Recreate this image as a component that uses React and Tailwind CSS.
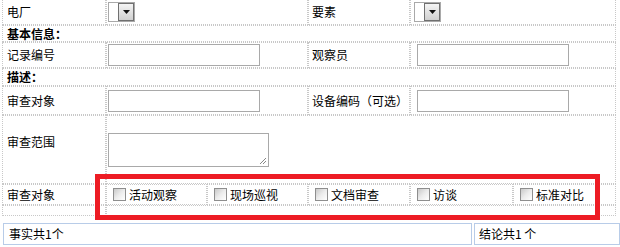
import React from 'react';

const cell = 'border border-dotted border-[#c8c8c8] p-0 align-middle';

const Select = ({ className = '' }) => (
  <div className={`flex h-[20px] w-[27px] border border-[#a9a9a9] bg-white ${className}`}>
    <div className="w-[9px]" />
    <div className="flex flex-1 items-center justify-center border border-[#707070] bg-gradient-to-b from-[#f4f4f4] to-[#d0d0d0]">
      <svg width="7" height="4" viewBox="0 0 7 4">
        <polygon points="0,0 7,0 3.5,4" fill="#111" />
      </svg>
    </div>
  </div>
);

const Input = ({ className = '' }) => (
  <div className={`h-[22px] w-[152px] border border-[#a9a9a9] bg-white ${className}`} />
);

const Check = ({ label }) => (
  <div className="flex items-center whitespace-nowrap pl-[6px]">
    <span className="h-[13px] w-[13px] border border-[#8e8e8e] bg-gradient-to-br from-[#c9c9c9] via-[#ececec] to-white" />
    <span className="ml-[3px]">{label}</span>
  </div>
);

const App = () => {
  const checks = ['活动观察', '现场巡视', '文档审查', '访谈', '标准对比'];
  return (
    <div
      className="relative h-[247px] w-[620px] overflow-hidden bg-white text-[12px] leading-none text-black"
      style={{ fontFamily: '"Noto Sans CJK SC", "Liberation Sans", sans-serif' }}
    >
      <table className="ml-[2px] table-fixed border-separate border-spacing-0" style={{ width: 614 }}>
        <colgroup>
          <col className="w-[104px]" />
          <col className="w-[202px]" />
          <col className="w-[102px]" />
          <col className="w-[206px]" />
        </colgroup>
        <tbody>
          <tr className="h-[25px]">
            <td className={`${cell} border-t-0 pl-[4px]`}>电厂</td>
            <td className={`${cell} border-t-0 pl-[1px]`}><Select /></td>
            <td className={`${cell} border-t-0 pl-[3px]`}>要素</td>
            <td className={`${cell} border-t-0 pl-[3px]`}><Select /></td>
          </tr>
          <tr className="h-[17px]">
            <td colSpan={4} className={`${cell} pl-[4px] font-bold`}>基本信息：</td>
          </tr>
          <tr className="h-[26px]">
            <td className={`${cell} pl-[4px]`}>记录编号</td>
            <td className={`${cell} pl-[1px]`}><Input /></td>
            <td className={`${cell} pl-[3px]`}>观察员</td>
            <td className={`${cell} pl-[6px]`}><Input /></td>
          </tr>
          <tr className="h-[18px]">
            <td colSpan={4} className={`${cell} pl-[4px] font-bold`}>描述：</td>
          </tr>
          <tr className="h-[29px]">
            <td className={`${cell} pl-[4px]`}>审查对象</td>
            <td className={`${cell} pl-[1px]`}><Input /></td>
            <td className={`${cell} pl-[3px] whitespace-nowrap`}>设备编码（可选）</td>
            <td className={`${cell} pl-[6px]`}><Input /></td>
          </tr>
          <tr className="h-[69px]">
            <td className={`${cell} pl-[4px]`}>
              <div className="-mt-[14px]">审查范围</div>
            </td>
            <td colSpan={3} className={`${cell} pl-[1px]`}>
              <div className="relative h-[34px] w-[161px] border border-[#a9a9a9] bg-white">
                <svg className="absolute bottom-[1px] right-[1px]" width="8" height="8" viewBox="0 0 8 8">
                  <path d="M7 1L1 7M7 4L4 7" stroke="#888" strokeWidth="1" />
                </svg>
              </div>
            </td>
          </tr>
          <tr className="h-[21px]">
            <td className={`${cell} pl-[4px]`}>审查对象</td>
            <td colSpan={3} className="p-0">
              <div className="grid h-[21px] grid-cols-[101px_101px_102px_103px_103px]">
                {checks.map((c) => (
                  <div key={c} className="flex h-[21px] items-center overflow-hidden border border-dotted border-[#c8c8c8]">
                    <Check label={c} />
                  </div>
                ))}
              </div>
            </td>
          </tr>
          <tr className="h-[11px]">
            <td className={cell} />
            <td colSpan={3} className={cell} />
          </tr>
        </tbody>
      </table>

      <div className="absolute left-[95px] top-[174px] h-[46px] w-[505px] border-[5px] border-[#ed1c24]" />

      <div className="mt-[7px] flex pl-[3px]">
        <div className="flex h-[22px] w-[469px] items-center border border-[#b8cce8] pl-[5px]">事实共1个</div>
        <div className="ml-[2px] flex h-[22px] flex-1 items-center border border-[#b8cce8] pl-[4px]">结论共1 个</div>
      </div>
    </div>
  );
};

export default App;
